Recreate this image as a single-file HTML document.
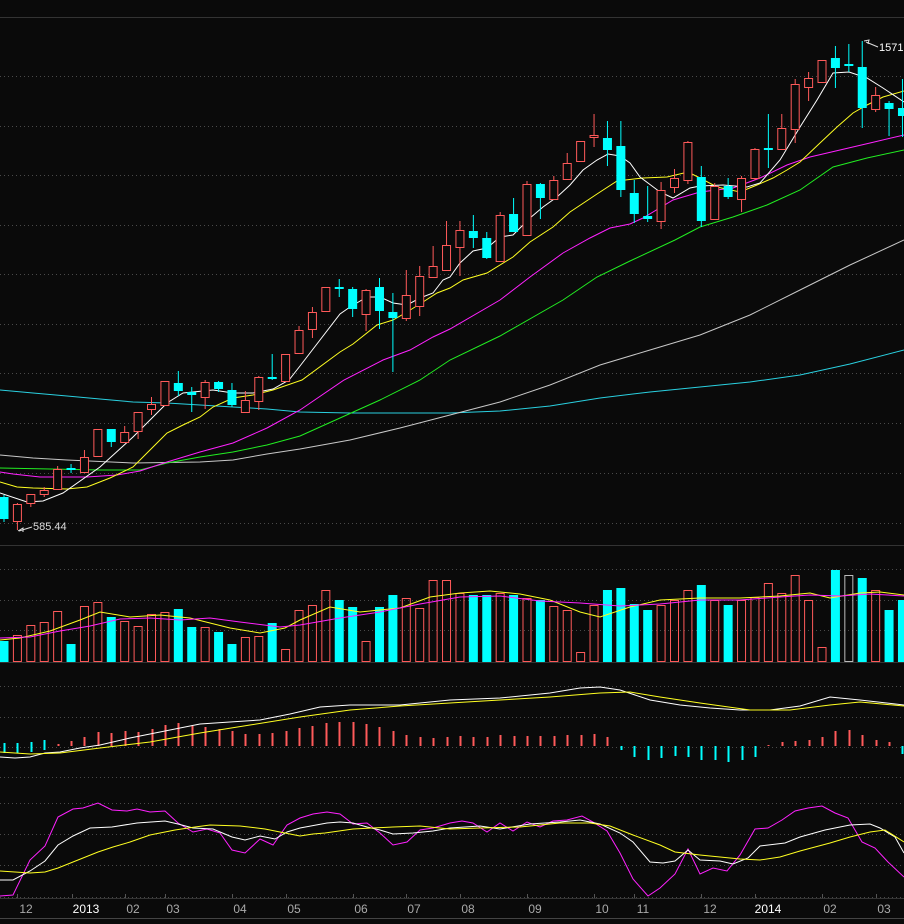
<!DOCTYPE html>
<html><head><meta charset="utf-8"><style>
html,body{margin:0;padding:0;background:#0a0a0a;width:904px;height:924px;overflow:hidden}
svg{display:block}
text{font-family:"Liberation Sans",sans-serif}
</style></head><body>
<svg id="s" width="904" height="924" viewBox="0 0 904 924" xmlns="http://www.w3.org/2000/svg">
<rect width="904" height="924" fill="#0a0a0a"/>
<g id="grid" stroke="#4a4a4a" stroke-width="1" stroke-dasharray="1,3"></g>
<line x1="0" y1="17.5" x2="904" y2="17.5" stroke="#333" />
<line x1="0" y1="545.5" x2="904" y2="545.5" stroke="#333" />
<line x1="0" y1="662.5" x2="904" y2="662.5" stroke="#333" />
<line x1="0" y1="898.5" x2="904" y2="898.5" stroke="#333" />
<line x1="0" y1="918.5" x2="904" y2="918.5" stroke="#444" />
<g id="g"></g>
<g fill="#aaa" font-size="12">
<text x="26" y="913" text-anchor="middle">12</text>
<text x="86" y="913" text-anchor="middle" fill="#fff">2013</text>
<text x="133" y="913" text-anchor="middle">02</text>
<text x="173" y="913" text-anchor="middle">03</text>
<text x="240" y="913" text-anchor="middle">04</text>
<text x="294" y="913" text-anchor="middle">05</text>
<text x="361" y="913" text-anchor="middle">06</text>
<text x="414" y="913" text-anchor="middle">07</text>
<text x="468" y="913" text-anchor="middle">08</text>
<text x="535" y="913" text-anchor="middle">09</text>
<text x="602" y="913" text-anchor="middle">10</text>
<text x="643" y="913" text-anchor="middle">11</text>
<text x="710" y="913" text-anchor="middle">12</text>
<text x="768" y="913" text-anchor="middle" fill="#fff">2014</text>
<text x="830" y="913" text-anchor="middle">02</text>
<text x="884" y="913" text-anchor="middle">03</text>
</g>
<g stroke="#ddd" fill="none">
<polyline points="866,42 878,47"/><polyline points="864,41 869,40 868,44"/>
<polyline points="19,531 32,527"/><polyline points="18,531 23,528 23,532"/>
</g>
<text x="879" y="51" fill="#fff" font-size="11" font-family="Liberation Mono,monospace">1571</text>
<text x="33" y="530" fill="#ddd" font-size="11" font-family="Liberation Mono,monospace">585.44</text>
</svg>
<script>
var NS="http://www.w3.org/2000/svg",g=document.getElementById('g'),gr=document.getElementById('grid');
function el(t,a,p){var e=document.createElementNS(NS,t);for(var k in a)e.setAttribute(k,a[k]);(p||g).appendChild(e);return e;}
[76,126,175,225,274,324,373,423,473,523,569,600,630,686,717,747,777,803,834,865,897].forEach(function(y){el('line',{x1:0,y1:y+.5,x2:904,y2:y+.5},gr);});
var ticks=[17,72,125,165,232,286,353,406,460,527,594,634,701,755,822,876];
ticks.forEach(function(x){el('line',{x1:x+.5,y1:894,x2:x+.5,y2:898,stroke:'#555'});});
var R='#ff5a5a',C='#00ffff';
var cd=[[497,519,495,522,'c'],[504,521,503,530,'r'],[494,503,494,507,'r'],[490,494,487,497,'r'],[469,489,466,489,'r'],[468,470,464,473,'x'],[457,472,450,472,'r'],[429,456,429,456,'r'],[429,442,429,447,'c'],[432,442,426,442,'r'],[412,431,412,439,'r'],[404,409,397,415,'r'],[381,405,381,405,'r'],[383,391,371,396,'c'],[392,395,387,412,'x'],[382,397,380,409,'r'],[382,389,381,392,'c'],[390,405,383,407,'c'],[400,412,391,413,'r'],[377,401,376,410,'r'],[377,379,354,380,'x'],[354,381,354,381,'r'],[330,353,326,353,'r'],[312,329,307,338,'r'],[287,311,287,311,'r'],[287,289,279,297,'x'],[289,309,287,317,'c'],[290,314,289,331,'r'],[287,311,278,329,'c'],[312,318,293,372,'c'],[295,318,270,321,'r'],[276,306,266,316,'r'],[266,277,246,277,'r'],[245,270,221,270,'r'],[230,247,221,276,'r'],[231,238,215,248,'c'],[238,258,232,259,'c'],[215,261,212,261,'r'],[214,232,198,232,'c'],[184,235,181,235,'r'],[184,198,183,219,'c'],[180,199,176,199,'r'],[163,179,153,179,'r'],[141,161,141,161,'r'],[135,137,114,147,'r'],[138,150,121,166,'c'],[146,190,121,197,'c'],[193,214,180,223,'c'],[216,219,186,222,'c'],[190,221,182,229,'r'],[178,187,169,193,'r'],[142,180,141,184,'r'],[177,221,166,227,'c'],[186,219,183,219,'r'],[186,197,178,199,'c'],[178,199,176,212,'r'],[149,178,148,180,'r'],[148,150,114,168,'x'],[128,149,114,149,'r'],[84,129,79,143,'r'],[78,87,72,101,'r'],[60,82,60,83,'r'],[58,68,46,88,'c'],[64,66,44,72,'x'],[67,108,41,128,'c'],[95,109,87,112,'r'],[103,109,101,136,'c'],[108,116,79,137,'c']];
var vol=[641,635,625,622,611,644,606,602,617,621,626,614,612,609,627,627,632,644,637,636,623,649,610,605,590,600,607,641,607,595,598,608,580,580,593,595,595,593,595,598,600,606,610,652,605,590,588,604,610,605,600,590,585,600,605,600,597,583,593,575,600,647,570,575,578,590,610,600];
var vtype={57:'r',63:'g'};
var macd=[753,753,752,750,744,741,737,732,733,731,732,729,725,723,726,727,729,731,734,734,733,731,728,726,723,722,722,724,727,731,735,737,738,737,736,737,737,735,736,736,736,736,735,735,734,737,750,757,760,758,756,757,760,760,762,760,757,745,742,741,740,737,731,730,735,740,742,754];
function X(i){return 4+13.41*i;}
function pl(pts,c,p){el('polyline',{points:pts,fill:'none',stroke:c,'stroke-width':1},p);}
pl("0,390 33,393 67,396 100,399 133,402 167,403 200,405 233,407 267,409 300,412 350,413 450,413 500,411 550,406 600,398 650,392 700,387 750,382 800,375 850,364 904,350",'#2ad0e0');
pl("0,455 33,458 67,460 133,463 200,462 233,460 267,454 300,449 350,440 400,428 450,415 500,402 550,385 600,365 650,350 700,335 750,315 800,290 850,265 904,240",'#c8c8c8');
pl("0,468 100,470 140,470 167,463 200,457 233,452 267,445 300,436 340,418 380,400 420,380 450,360 500,336 563,300 597,277 630,261 675,240 700,227 733,217 767,205 800,190 833,167 867,158 904,150",'#22ee22');
pl("0,472 13,474 40,477 87,477 117,475 140,471 167,462 200,452 233,443 267,428 300,410 344,380 383,360 410,350 433,337 450,329 500,300 530,277 563,253 590,238 610,228 630,224 643,218 673,200 700,192 733,188 760,178 787,165 810,157 840,150 870,143 904,135",'#ff22ff');
pl("0,482 17,487 33,488 67,489 87,487 110,478 133,467 150,450 167,433 183,425 200,417 213,407 233,398 253,395 273,390 302,380 340,352 353,344 377,325 393,320 407,312 423,302 437,293 450,288 463,280 487,273 513,257 530,242 553,227 570,212 597,194 617,181 643,178 667,177 688,172 700,178 717,187 740,192 757,185 773,178 787,170 800,162 820,143 837,127 853,113 867,105 883,97 904,91",'#ffff22');
pl("0,493 27,502 43,501 63,493 100,467 133,437 167,403 183,393 213,390 233,393 253,393 273,389 289,380 300,366 340,314 350,307 367,297 380,297 393,303 407,305 420,298 433,293 443,280 450,277 460,263 473,251 487,248 500,237 513,235 530,218 543,207 557,197 570,185 583,170 597,160 608,154 620,156 630,163 640,177 660,192 673,198 690,188 700,186 723,185 747,187 760,183 780,160 800,127 817,100 833,73 849,72 867,78 883,88 904,102",'#ffffff');
cd.forEach(function(c,i){var x=X(i),col=(c[4]=='r')?R:C;
 el('line',{x1:x,y1:c[2],x2:x,y2:c[3],stroke:col});
 if(c[4]=='r'){el('rect',{x:x-4,y:c[0]+.5,width:8,height:Math.max(1,c[1]-c[0]),fill:'#0a0a0a',stroke:R});}
 else if(c[4]=='x'){el('rect',{x:x-4.5,y:c[0],width:9,height:Math.max(1.5,c[1]-c[0]),fill:C});}
 else el('rect',{x:x-4.5,y:c[0],width:9,height:c[1]-c[0],fill:C});
});
cd.forEach(function(c,i){var x=X(i),v=vol[i],t=vtype[i]||c[4];
 if(t=='r')el('rect',{x:x-4,y:v+.5,width:8,height:661-v,fill:'none',stroke:R});
 else if(t=='g')el('rect',{x:x-4,y:v+.5,width:8,height:661-v,fill:'none',stroke:'#bbb'});
 else el('rect',{x:x-4.5,y:v,width:9,height:662-v,fill:C});
});
pl("0,640 20,638 50,631 80,620 100,612 130,617 160,615 190,618 230,628 260,633 285,628 300,620 330,607 360,612 400,608 430,597 460,593 490,591 520,594 550,600 580,612 600,617 630,607 660,600 700,598 740,598 780,596 810,593 830,598 860,593 880,592 904,595",'#ffff22');
pl("0,638 30,637 60,631 90,626 120,619 150,618 180,620 210,618 240,622 280,627 300,625 340,618 380,612 420,604 460,597 500,596 540,601 580,603 620,606 660,604 700,600 740,600 780,597 810,595 840,596 870,594 904,596",'#ff22ff');
macd.forEach(function(m,i){var x=Math.round(X(i))+.5;
 if(i<4||(i>=46&&i<=56)||i==67){var t=i<4?m-10:746;el('line',{x1:x,y1:t,x2:x,y2:m,stroke:C,'stroke-width':2});}
 else el('line',{x1:x,y1:m,x2:x,y2:746,stroke:R,'stroke-width':2});
});
pl("0,757 15,758 30,757 45,753 60,752 80,748 100,745 130,738 170,730 200,724 230,722 260,720 290,714 320,707 350,705 400,705 450,700 500,698 550,693 580,688 600,687 620,690 650,700 680,705 710,708 740,710 770,710 800,706 830,697 860,700 904,705",'#ffffff');
pl("0,752 30,754 60,753 100,748 150,742 200,733 250,725 300,717 350,710 400,706 450,703 500,700 550,697 600,693 630,692 660,697 700,703 750,710 790,710 830,705 860,702 904,706",'#ffff22');
pl("0,896 13,895 30,860 45,846 58,817 73,809 83,808 98,803 112,810 127,811 137,809 150,812 165,811 178,823 193,832 207,829 220,833 232,850 245,853 260,839 273,845 287,825 300,818 313,814 327,812 340,814 353,824 367,823 380,833 393,845 407,842 420,830 433,828 450,823 462,821 473,823 487,832 500,823 513,831 527,822 540,827 553,821 567,820 582,816 593,822 607,831 620,853 633,879 648,896 660,888 675,874 688,849 700,874 713,868 727,871 740,855 755,829 768,828 782,820 795,811 808,808 822,806 835,813 848,818 862,842 875,848 888,862 904,877",'#ff22ff');
pl("0,880 13,880 30,871 45,861 58,845 73,836 90,828 112,827 137,823 165,821 178,824 193,828 213,829 232,837 245,840 260,836 275,839 287,832 300,828 327,823 340,822 353,823 367,827 380,830 393,834 413,833 433,831 450,828 480,826 500,829 530,824 560,822 580,820 600,824 620,833 633,842 650,862 663,863 675,861 688,850 700,860 720,861 733,864 748,858 760,846 785,843 800,837 825,830 850,825 870,824 880,828 895,837 904,853",'#ffffff');
pl("0,871 30,873 45,872 58,868 73,862 98,852 113,847 130,842 150,835 175,830 195,827 210,825 240,826 265,829 285,833 300,836 313,834 325,833 353,829 393,827 420,826 450,829 480,828 520,827 560,823 590,823 610,826 633,835 660,845 675,852 700,855 720,857 740,859 760,860 780,857 800,851 830,843 850,837 870,832 885,830 904,842",'#ffff22');
</script>
</body></html>
